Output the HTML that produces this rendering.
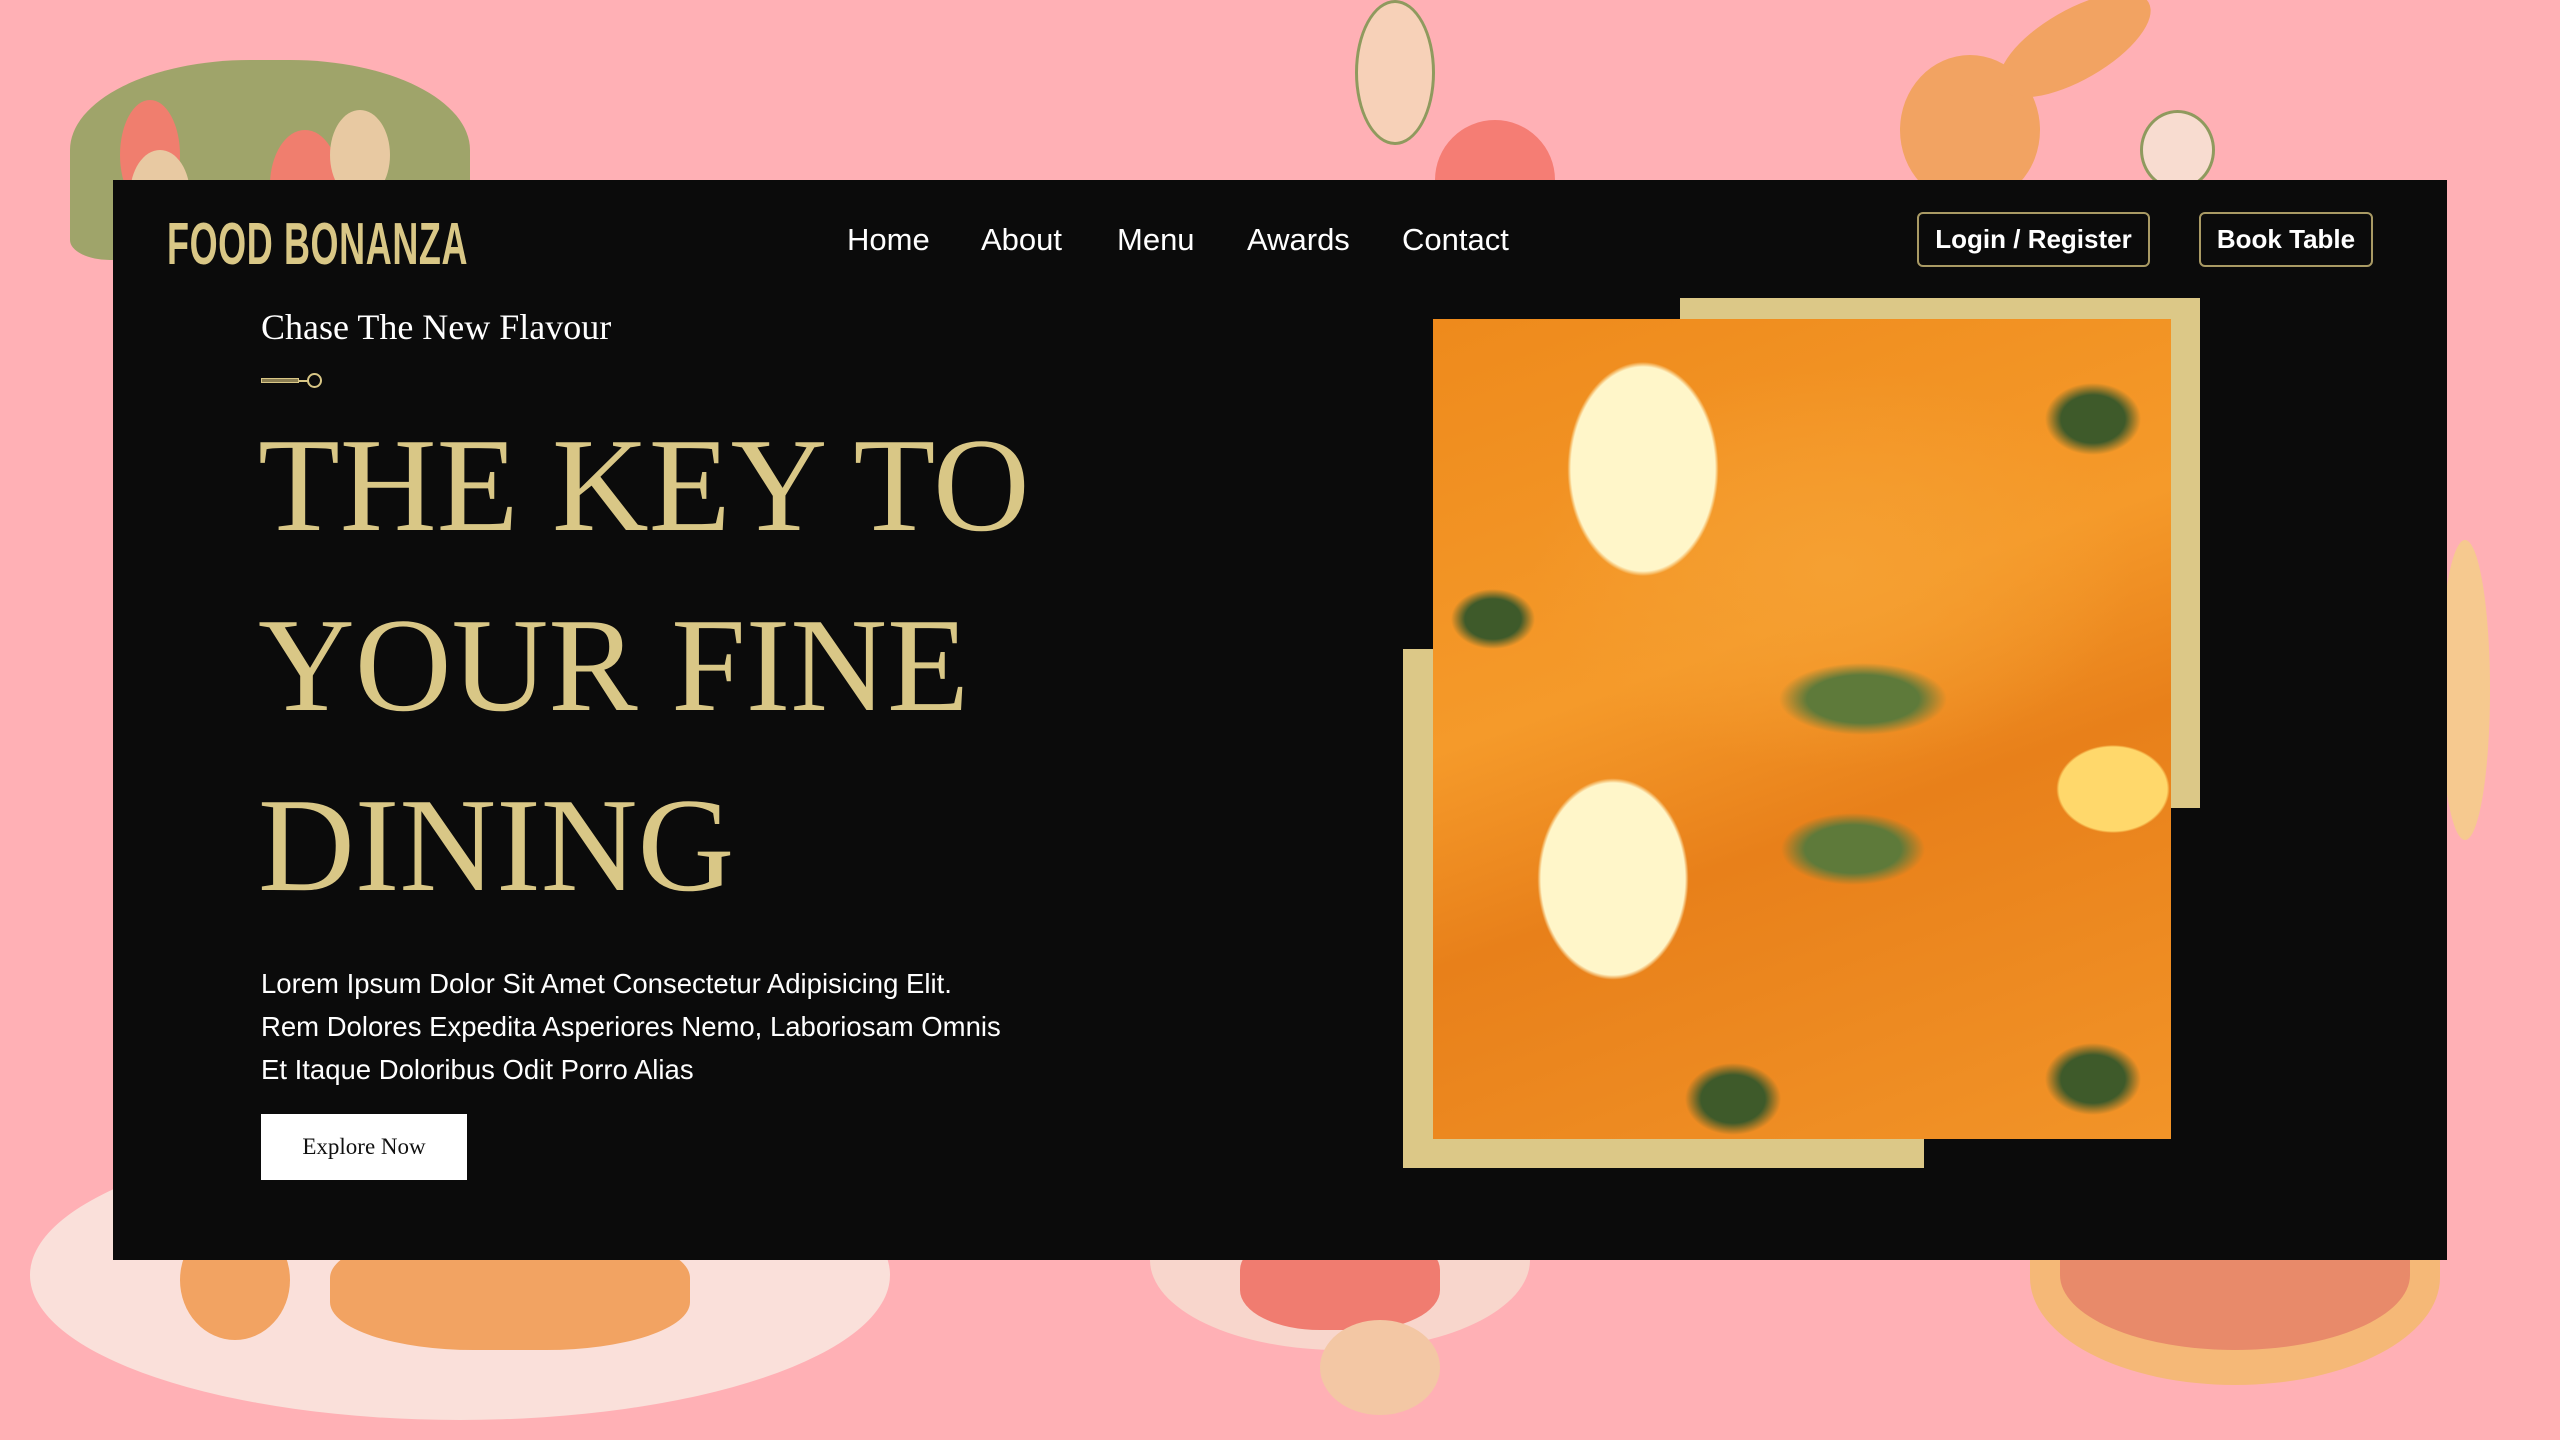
<!DOCTYPE html>
<html><head><meta charset="utf-8"><style>
*{margin:0;padding:0;box-sizing:border-box}
body{width:2560px;height:1440px;background:#ffb0b5;position:relative;overflow:hidden;font-family:"Liberation Sans",sans-serif}
.a{position:absolute}
.panel{left:113px;top:180px;width:2334px;height:1080px;background:#0b0b0b}
.logo{left:167px;top:210px;font-family:"Liberation Sans",sans-serif;font-weight:bold;font-size:58px;color:#d9c786;letter-spacing:1px;transform:scale(0.62,1.02);transform-origin:top left;white-space:nowrap}
.nav{top:222px;color:#fff;font-size:31px;white-space:nowrap}
.btn{top:212px;height:55px;border:2px solid #a99a64;border-radius:6px;color:#fff;font-size:26px;font-weight:bold;display:flex;align-items:center;justify-content:center}
.serif{font-family:"Liberation Serif",serif}
h1{position:absolute;left:258px;top:395px;font-family:"Liberation Serif",serif;font-weight:normal;color:#d9c786;font-size:134px;line-height:180px;letter-spacing:0px}
.p{left:261px;top:962px;color:#fff;font-size:27.5px;line-height:43px}
.food{left:1433px;top:319px;width:738px;height:820px;background:
radial-gradient(ellipse 120px 170px at 210px 150px,#fff6c9 60%,transparent 63%),
radial-gradient(ellipse 120px 160px at 180px 560px,#fff6c9 60%,transparent 63%),
radial-gradient(ellipse 90px 70px at 680px 470px,#ffd86b 60%,transparent 63%),
radial-gradient(ellipse 140px 60px at 430px 380px,#5e7a3a 40%,transparent 60%),
radial-gradient(ellipse 120px 60px at 420px 530px,#5e7a3a 40%,transparent 60%),
radial-gradient(ellipse 70px 50px at 60px 300px,#3e5a2a 40%,transparent 60%),
radial-gradient(ellipse 80px 60px at 660px 100px,#3e5a2a 40%,transparent 60%),
radial-gradient(ellipse 80px 60px at 300px 780px,#3e5a2a 40%,transparent 60%),
radial-gradient(ellipse 80px 60px at 660px 760px,#3e5a2a 40%,transparent 60%),
radial-gradient(ellipse 300px 200px at 400px 250px,#f5a032,transparent),
linear-gradient(160deg,#ee8a1c,#f59a2a 40%,#e8801a 60%,#f29428)}
</style></head><body>
<div class="a" style="left:70px;top:60px;width:400px;height:200px;background:#9fa46a;border-radius:45% 45% 10% 10%"></div>
<div class="a" style="left:120px;top:100px;width:60px;height:110px;background:#f07e6e;border-radius:50%"></div>
<div class="a" style="left:270px;top:130px;width:70px;height:110px;background:#f07e6e;border-radius:50%"></div>
<div class="a" style="left:130px;top:150px;width:60px;height:90px;background:#e8c9a2;border-radius:50%"></div>
<div class="a" style="left:330px;top:110px;width:60px;height:90px;background:#e8c9a2;border-radius:50%"></div>
<div class="a" style="left:1355px;top:0px;width:80px;height:145px;background:#f7d1b8;border:3px solid #8f9a5e;border-radius:50%"></div>
<div class="a" style="left:1435px;top:120px;width:120px;height:120px;background:#f57d74;border-radius:50%"></div>
<div class="a" style="left:1900px;top:55px;width:140px;height:150px;background:#f2a362;border-radius:50%"></div>
<div class="a" style="left:1990px;top:10px;width:170px;height:70px;background:#f2a362;border-radius:50%;transform:rotate(-30deg)"></div>
<div class="a" style="left:2140px;top:110px;width:75px;height:80px;background:#f8dcd0;border:3px solid #8f9a5e;border-radius:50%"></div>
<div class="a" style="left:2440px;top:540px;width:50px;height:300px;background:#f6c98f;border-radius:50%"></div>
<div class="a" style="left:30px;top:1130px;width:860px;height:290px;background:#fae0da;border-radius:50%"></div>
<div class="a" style="left:330px;top:1230px;width:360px;height:120px;background:#f2a362;border-radius:40%"></div>
<div class="a" style="left:180px;top:1220px;width:110px;height:120px;background:#f2a362;border-radius:50%"></div>
<div class="a" style="left:1150px;top:1170px;width:380px;height:180px;background:#f8d6cc;border-radius:50%"></div>
<div class="a" style="left:1240px;top:1230px;width:200px;height:100px;background:#f07c70;border-radius:40%"></div>
<div class="a" style="left:1320px;top:1320px;width:120px;height:95px;background:#f3c7a4;border-radius:50%"></div>
<div class="a" style="left:2030px;top:1170px;width:410px;height:215px;background:#f5b877;border-radius:0 0 50% 50%"></div>
<div class="a" style="left:2060px;top:1200px;width:350px;height:150px;background:#e88a6a;border-radius:0 0 50% 50%"></div>

<div class="a panel"></div>
<div class="a logo">FOOD BONANZA</div>
<div class="a nav" style="left:847px">Home</div>
<div class="a nav" style="left:981px">About</div>
<div class="a nav" style="left:1117px">Menu</div>
<div class="a nav" style="left:1247px">Awards</div>
<div class="a nav" style="left:1402px">Contact</div>
<div class="a btn" style="left:1917px;width:233px">Login / Register</div>
<div class="a btn" style="left:2199px;width:174px">Book Table</div>

<div class="a serif" style="left:261px;top:306px;color:#fff;font-size:36px">Chase The New Flavour</div>
<div class="a" style="left:261px;top:378px;width:38px;height:5px;border:1px solid #d9c786;background:#8a7d52"></div>
<div class="a" style="left:307px;top:373px;width:15px;height:15px;border:2px solid #d9c786;border-radius:50%"></div>
<div class="a" style="left:298px;top:380px;width:10px;height:2px;background:#d9c786"></div>
<h1>THE KEY TO<br>YOUR FINE<br>DINING</h1>
<div class="a p">Lorem Ipsum Dolor Sit Amet Consectetur Adipisicing Elit.<br>Rem Dolores Expedita Asperiores Nemo, Laboriosam Omnis<br>Et Itaque Doloribus Odit Porro Alias</div>
<div class="a serif" style="left:261px;top:1114px;width:206px;height:66px;background:#fff;color:#111;font-size:23px;display:flex;align-items:center;justify-content:center">Explore Now</div>

<div class="a" style="left:1680px;top:298px;width:520px;height:510px;background:#dcc887"></div>
<div class="a" style="left:1403px;top:649px;width:521px;height:519px;background:#dcc887"></div>
<div class="a food"></div>
</body></html>
